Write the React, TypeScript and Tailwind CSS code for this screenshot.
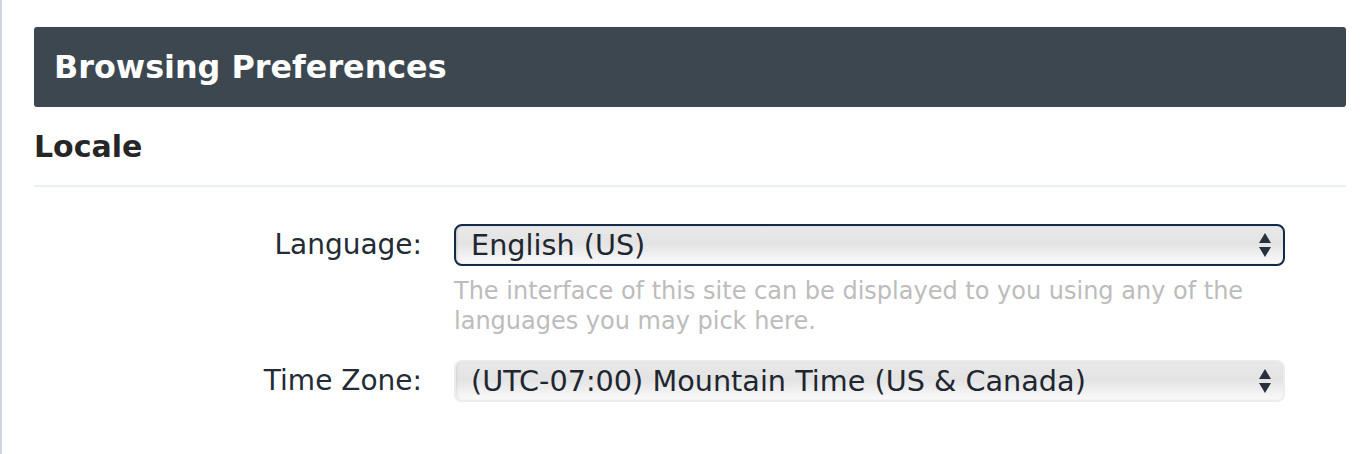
import React from "react";

function Arrows() {
  return (
    <svg width="12" height="24" viewBox="0 0 12 24" className="shrink-0">
      <polygon points="6,0 12,10 0,10" fill="#27313d" />
      <polygon points="0,14 12,14 6,24" fill="#27313d" />
    </svg>
  );
}

function FakeSelect({ value, focused }: { value: string; focused?: boolean }) {
  return (
    <div
      className={
        "flex h-[42px] w-[831px] items-center justify-between rounded-[8px] pl-[15px] pr-[12px] text-[28.7px] text-[#1e2630] " +
        (focused
          ? "border-2 border-[#15294a] shadow-[inset_1px_0_2px_rgba(0,0,0,0.15)]"
          : "border-2 border-[#ececec] shadow-[inset_1px_0_2px_rgba(0,0,0,0.08)]")
      }
      style={{
        background:
          "linear-gradient(to bottom, #e9e9e9 0%, #e3e3e3 45%, #e9e9e9 60%, #f4f4f4 85%, #fbfbfb 100%)",
      }}
    >
      <span className="leading-none whitespace-nowrap">{value}</span>
      <Arrows />
    </div>
  );
}

export default function App() {
  return (
    <div
      className="min-h-[454px] w-[1370px] bg-white border-l-2 border-[#cdd5e0] pl-[32px] pr-[24px] pt-[27px]"
      style={{ fontFamily: '"DejaVu Sans", Verdana, sans-serif' }}
    >
      <div className="flex h-[80px] items-center rounded-[3px] bg-[#3c4750] pl-[20px]">
        <h1 className="text-[31.8px] font-bold leading-none text-white">Browsing Preferences</h1>
      </div>
      <h2 className="mt-[22px] h-[36px] text-[30px] font-bold leading-[36px] text-[#262626]">Locale</h2>
      <div className="mt-[20px] h-[2px] bg-[#eaf0f7]" />

      <div className="mt-[37px] grid grid-cols-[388px_831px] gap-x-[32px]">
        <div className="flex h-[42px] items-center justify-end text-[28px] text-[#222b36]">Language:</div>
        <div>
          <FakeSelect value="English (US)" focused />
          <p className="mt-[10px] text-[24px] leading-[30px] text-[#bcbcbc]">
            The interface of this site can be displayed to you using any of the
            <br />
            languages you may pick here.
          </p>
        </div>

        <div className="mt-[24px] flex h-[42px] items-center justify-end text-[28px] text-[#222b36]">Time Zone:</div>
        <div className="mt-[24px]">
          <FakeSelect value="(UTC-07:00) Mountain Time (US & Canada)" />
        </div>
      </div>
    </div>
  );
}
